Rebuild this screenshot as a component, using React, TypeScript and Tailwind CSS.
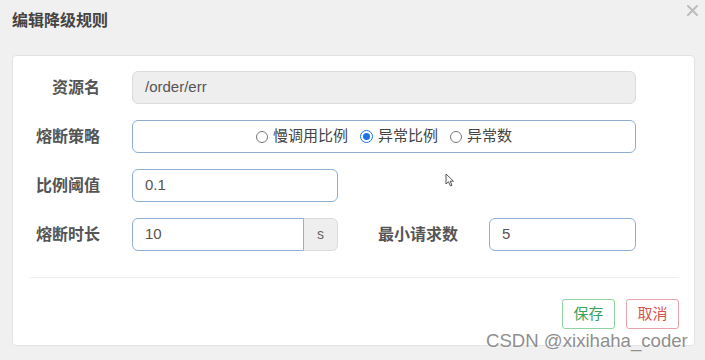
const font = { fontFamily: '"Liberation Sans", "Noto Sans CJK SC", sans-serif' };

const Radio = ({ checked, label }: { checked?: boolean; label: string }) => (
  <label className="flex items-center gap-[5px]">
    {checked ? (
      <span className="flex h-[13px] w-[13px] items-center justify-center rounded-full border-[1.5px] border-[#1a73e8]">
        <span className="h-[7px] w-[7px] rounded-full bg-[#1a73e8]" />
      </span>
    ) : (
      <span className="h-[12px] w-[12px] rounded-full border border-[#767676] bg-white" />
    )}
    <span className="text-[15px] text-[#444]">{label}</span>
  </label>
);

const Label = ({ children, className = '' }: { children: string; className?: string }) => (
  <span className={`text-right text-[16px] font-bold text-[#555] ${className}`}>{children}</span>
);

const App = () => {
  return (
    <div className="relative h-[360px] w-[705px] overflow-hidden bg-[#f0f0f0]" style={font}>
      <div className="flex h-[55px] items-start pl-[12px] pt-[10px]">
        <h4 className="text-[16px] font-bold leading-[22px] text-[#444]">编辑降级规则</h4>
      </div>
      <svg className="absolute left-[687px] top-[5px]" width="11" height="11" viewBox="0 0 11 11">
        <path d="M1 1 L10 10 M10 1 L1 10" stroke="#bdbdbd" strokeWidth="2" strokeLinecap="round" />
      </svg>

      <div className="ml-[12px] flex h-[291px] w-[683px] flex-col rounded-[4px] border border-[#e3e3e3] bg-white">
        <div className="flex flex-col gap-[16px] pt-[15px]">
          <div className="flex items-center">
            <Label className="w-[87px]">资源名</Label>
            <div className="ml-[32px] flex h-[33px] w-[504px] items-center rounded-[6px] border border-[#dcdcdc] bg-[#eeeeee] pl-[12px] text-[15px] text-[#555]">
              /order/err
            </div>
          </div>

          <div className="flex items-center">
            <Label className="w-[87px]">熔断策略</Label>
            <div className="ml-[32px] flex h-[33px] w-[504px] items-center justify-center gap-[12px] rounded-[6px] border border-[#8fb0d0]">
              <Radio label="慢调用比例" />
              <Radio checked label="异常比例" />
              <Radio label="异常数" />
            </div>
          </div>

          <div className="flex items-center">
            <Label className="w-[87px]">比例阈值</Label>
            <div className="ml-[32px] flex h-[33px] w-[206px] items-center rounded-[6px] border border-[#8fb0d0] pl-[12px] text-[15px] text-[#555]">
              0.1
            </div>
          </div>

          <div className="flex items-center">
            <Label className="w-[87px]">熔断时长</Label>
            <div className="ml-[32px] flex h-[33px]">
              <div className="flex w-[172px] items-center rounded-l-[6px] border border-[#8fb0d0] pl-[12px] text-[15px] text-[#555]">
                10
              </div>
              <div className="flex w-[34px] items-center justify-center rounded-r-[6px] border border-l-0 border-[#dcdcdc] bg-[#eeeeee] text-[14px] text-[#666]">
                s
              </div>
            </div>
            <Label className="ml-[40px] w-[80px]">最小请求数</Label>
            <div className="ml-[31px] flex h-[33px] w-[147px] items-center rounded-[6px] border border-[#8fb0d0] pl-[12px] text-[15px] text-[#555]">
              5
            </div>
          </div>
        </div>

        <div className="ml-[16px] mr-[15px] mt-[26px] h-px bg-[#efefef]" />

        <div className="mr-[15px] mt-[21px] flex justify-end gap-[11px]">
          <button className="h-[30px] w-[53px] rounded-[3px] border border-[#8fd3a0] text-[15px] text-[#3aa35a]">
            保存
          </button>
          <button className="h-[30px] w-[53px] rounded-[3px] border border-[#e9a1aa] text-[15px] text-[#d9534f]">
            取消
          </button>
        </div>
      </div>

      <svg className="absolute left-[445px] top-[173px]" width="10" height="14" viewBox="0 0 10 14">
        <path d="M1 1 L1 11 L3.5 8.8 L5.5 13 L7 12.3 L5.2 8.2 L8.5 8.2 Z" fill="#fff" stroke="#444" strokeWidth="0.9" strokeLinejoin="round" />
      </svg>

      <span
        className="absolute left-[486px] top-[330px] text-[18.6px] leading-[22px] text-[#8f8f8f]"
        style={{ textShadow: '0 0 2px #fff' }}
      >
        CSDN @xixihaha_coder
      </span>
    </div>
  );
};

export default App;
